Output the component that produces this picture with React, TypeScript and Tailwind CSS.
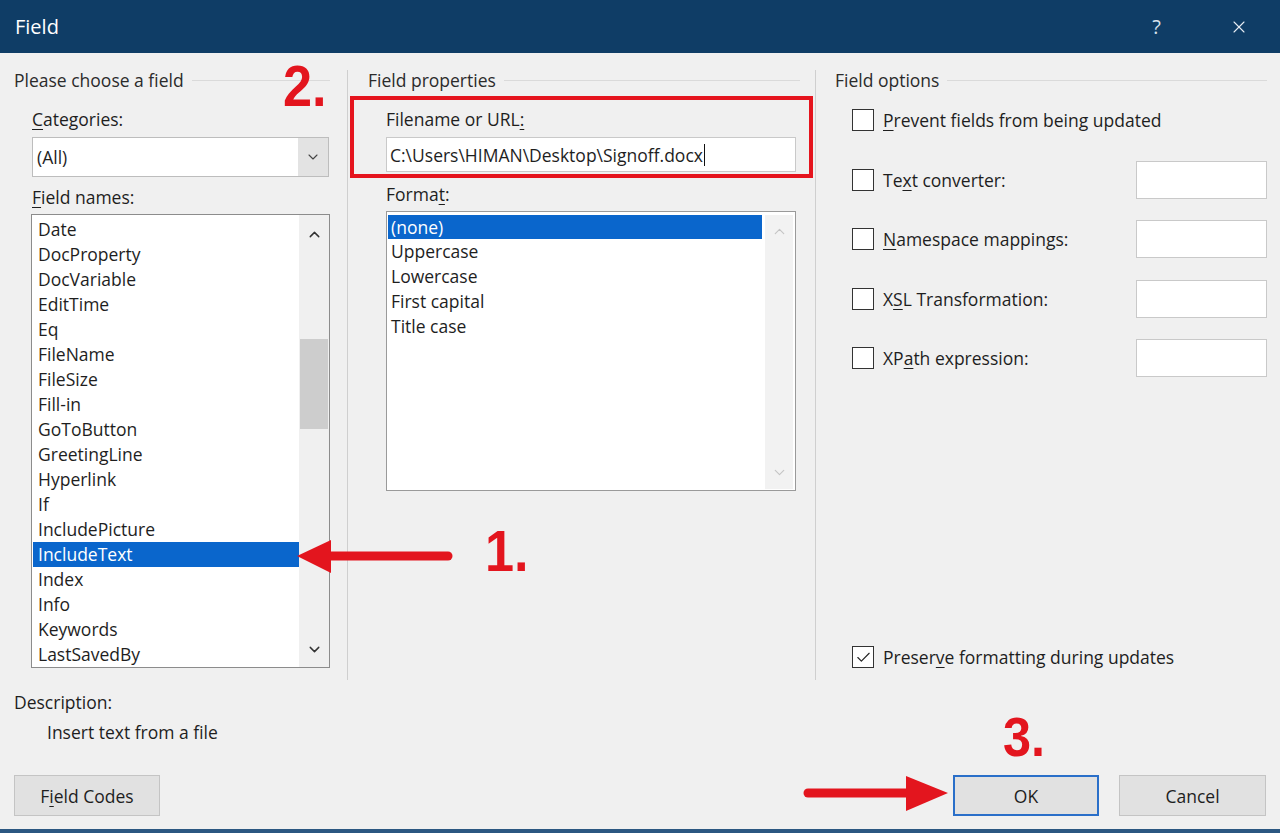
import { Check, ChevronDown, ChevronUp, X } from "lucide-react";

const FIELD_NAMES = [
  "Date",
  "DocProperty",
  "DocVariable",
  "EditTime",
  "Eq",
  "FileName",
  "FileSize",
  "Fill-in",
  "GoToButton",
  "GreetingLine",
  "Hyperlink",
  "If",
  "IncludePicture",
  "IncludeText",
  "Index",
  "Info",
  "Keywords",
  "LastSavedBy",
];

const FORMATS = ["(none)", "Uppercase", "Lowercase", "First capital", "Title case"];

function GroupHeader({ title }: { title: string }) {
  return (
    <div className="flex h-[20px] items-center gap-2">
      <span className="whitespace-nowrap text-[#2b2b2b]">{title}</span>
      <div className="h-px flex-1 bg-[#dadada]" />
    </div>
  );
}

function CheckBox({ checked }: { checked?: boolean }) {
  return (
    <div className="flex h-[22px] w-[22px] shrink-0 items-center justify-center border border-[#333] bg-white">
      {checked ? <Check size={17} strokeWidth={1.6} className="text-[#222]" /> : null}
    </div>
  );
}

function OptionRow({ label, withInput }: { label: React.ReactNode; withInput?: boolean }) {
  return (
    <div className="flex h-[38px] items-center justify-between">
      <div className="flex items-center gap-[9px]">
        <CheckBox />
        <span className="whitespace-nowrap">{label}</span>
      </div>
      {withInput ? <div className="h-[38px] w-[131px] border border-[#c9c9c9] bg-white" /> : null}
    </div>
  );
}

function u(ch: string) {
  return <span className="underline decoration-1 underline-offset-[3px]">{ch}</span>;
}

export default function App() {
  return (
    <div
      className="relative h-[833px] w-[1280px] overflow-hidden border-b-4 border-[#2b5781] bg-[#f0f0f0] text-[17.5px] leading-[22px] text-[#1e1e1e]"
      style={{ fontFamily: '"Open Sans", "Noto Sans", sans-serif' }}
    >
      {/* title bar */}
      <div className="flex h-[53px] items-center justify-between bg-[#0f3d66] pl-[15px] pr-[31px] text-white">
        <span className="text-[20px]">Field</span>
        <div className="flex items-center gap-[68px]">
          <span className="text-[20px] text-[#d8e2ec]">?</span>
          <X size={20} strokeWidth={1.3} className="text-[#e6edf3]" />
        </div>
      </div>

      {/* columns */}
      <div className="flex pt-[17px]">
        {/* left */}
        <div className="flex h-[610px] w-[347px] flex-col pl-[14px] pr-[17px]">
          <GroupHeader title="Please choose a field" />
          <div className="ml-[18px] mt-[18px]">{u("C")}ategories:</div>
          <div className="ml-[18px] mt-[7px] flex h-[40px] w-[297px] border border-[#bdbdbd] bg-white">
            <div className="flex flex-1 items-center pl-[4px]">(All)</div>
            <div className="flex w-[30px] items-center justify-center bg-[#e3e3e3]">
              <ChevronDown size={16} strokeWidth={1.6} className="text-[#444]" />
            </div>
          </div>
          <div className="ml-[18px] mt-[9px]">{u("F")}ield names:</div>
          <div className="ml-[17px] mt-[6px] flex h-[454px] w-[299px] border border-[#8c8c8c] bg-white">
            <div className="flex-1 overflow-hidden pl-px pt-[2px]">
              {FIELD_NAMES.map((name) => (
                <div
                  key={name}
                  className={
                    name === "IncludeText"
                      ? "h-[25px] bg-[#0a66cc] pl-[5px] leading-[25px] text-white"
                      : "h-[25px] pl-[5px] leading-[25px]"
                  }
                >
                  {name}
                </div>
              ))}
            </div>
            <div className="flex w-[30px] flex-col items-center bg-[#f0f0f0]">
              <ChevronUp size={17} strokeWidth={2} className="mt-[11px] text-[#333]" />
              <div className="mt-[96px] h-[90px] w-[28px] bg-[#cdcdcd]" />
              <div className="flex-1" />
              <ChevronDown size={17} strokeWidth={2} className="mb-[9px] text-[#333]" />
            </div>
          </div>
        </div>

        <div className="h-[610px] w-px bg-[#cfcfcf]" />

        {/* middle */}
        <div className="flex h-[610px] w-[467px] flex-col">
          <div className="pl-[20px] pr-[15px]">
            <GroupHeader title="Field properties" />
          </div>
          <div className="ml-[2px] mt-[6px] w-[463px] border-4 border-[#e5141d] pb-[2px] pl-[32px] pt-[8px]">
            <div>Filename or URL{u(":")}</div>
            <div className="mt-[7px] flex h-[35px] w-[410px] items-center border border-[#c9c9c9] bg-white pl-[3px]">
              <span className="whitespace-nowrap">C:\Users\HIMAN\Desktop\Signoff.docx</span>
              <span className="ml-px h-[22px] w-px bg-[#111]" />
            </div>
          </div>
          <div className="ml-[38px] mt-[5px]">Forma{u("t")}:</div>
          <div className="ml-[38px] mt-[6px] flex h-[280px] w-[410px] border border-[#9a9a9a] bg-white p-[1px] pt-[3px]">
            <div className="w-[374px]">
              {FORMATS.map((f, i) => (
                <div
                  key={f}
                  className={
                    i === 0
                      ? "h-[24px] bg-[#0a66cc] pl-[3px] leading-[24px] text-white"
                      : "h-[25px] pl-[3px] leading-[25px]"
                  }
                >
                  {f}
                </div>
              ))}
            </div>
            <div className="ml-[3px] flex w-[28px] flex-col items-center justify-between bg-[#f2f2f2] py-[8px]">
              <ChevronUp size={17} strokeWidth={1.6} className="text-[#c4c4c4]" />
              <ChevronDown size={17} strokeWidth={1.6} className="text-[#c4c4c4]" />
            </div>
          </div>
        </div>

        <div className="h-[610px] w-px bg-[#cfcfcf]" />

        {/* right */}
        <div className="flex h-[610px] flex-1 flex-col pb-[4px]">
          <div className="pl-[19px] pr-[13px]">
            <GroupHeader title="Field options" />
          </div>
          <div className="mt-[11px] flex flex-col gap-[21.5px] pl-[36px] pr-[13px]">
            <OptionRow label={<>{u("P")}revent fields from being updated</>} />
            <OptionRow label={<>Te{u("x")}t converter:</>} withInput />
            <OptionRow label={<>{u("N")}amespace mappings:</>} withInput />
            <OptionRow label={<>X{u("S")}L Transformation:</>} withInput />
            <OptionRow label={<>XP{u("a")}th expression:</>} withInput />
          </div>
          <div className="flex-1" />
          <div className="flex h-[38px] items-center gap-[9px] pl-[36px]">
            <CheckBox checked />
            <span>Preser{u("v")}e formatting during updates</span>
          </div>
        </div>
      </div>

      {/* description */}
      <div className="mt-[11px] pl-[14px]">Description:</div>
      <div className="mt-[8px] pl-[47px]">Insert text from a file</div>

      {/* buttons */}
      <div className="mt-[32px] flex justify-between px-[14px]">
        <button className="h-[41px] w-[146px] border border-[#c4c4c4] bg-[#e1e1e1]">
          F{u("i")}eld Codes
        </button>
        <div className="flex gap-[20px]">
          <button className="h-[41px] w-[146px] border-2 border-[#2a6fc9] bg-[#e1e1e1]">OK</button>
          <button className="h-[41px] w-[147px] border border-[#c4c4c4] bg-[#e1e1e1]">Cancel</button>
        </div>
      </div>

      {/* red annotations */}
      <div
        className="absolute left-[283px] top-[57px] origin-left scale-x-[0.9] text-[58px] font-bold leading-none text-[#e3151e]"
        style={{ fontFamily: '"Liberation Sans", Arial, sans-serif' }}
      >
        2.
      </div>
      <div
        className="absolute left-[485px] top-[522px] origin-left scale-x-[0.9] text-[58px] font-bold leading-none text-[#e3151e]"
        style={{ fontFamily: '"Liberation Sans", Arial, sans-serif' }}
      >
        1.
      </div>
      <div
        className="absolute left-[1003px] top-[709px] origin-left scale-x-[0.9] text-[56px] font-bold leading-none text-[#e3151e]"
        style={{ fontFamily: '"Liberation Sans", Arial, sans-serif' }}
      >
        3.
      </div>

      <svg className="absolute left-[294px] top-[537px]" width="162" height="40" viewBox="0 0 162 40">
        <line x1="34" y1="19" x2="154" y2="19" stroke="#e3151e" strokeWidth="9" strokeLinecap="round" />
        <polygon points="3,19 37,3 37,36" fill="#e3151e" />
      </svg>
      <svg className="absolute left-[800px] top-[774px]" width="152" height="40" viewBox="0 0 152 40">
        <line x1="8" y1="19" x2="112" y2="19" stroke="#e3151e" strokeWidth="9" strokeLinecap="round" />
        <polygon points="148,19 106,2 106,37" fill="#e3151e" />
      </svg>
    </div>
  );
}
